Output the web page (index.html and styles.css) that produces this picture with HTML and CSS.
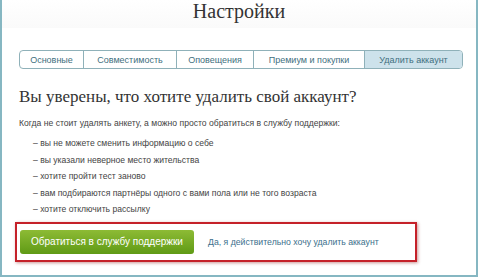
FILE: index.html
```html
<!DOCTYPE html>
<html>
<head>
  <title>Настройки</title>
  <link rel="stylesheet" href="styles.css">
</head>
<body>
  <div class="frame">
    <h1 class="title">Настройки</h1>

    <div class="tabs">
      <div class="tab tab-basic">Основные</div>
      <div class="tab tab-compat">Совместимость</div>
      <div class="tab tab-notify">Оповещения</div>
      <div class="tab tab-premium">Премиум и покупки</div>
      <div class="tab tab-delete active">Удалить аккаунт</div>
    </div>

    <h2 class="question">Вы уверены, что хотите удалить свой аккаунт?</h2>
    <p class="intro">Когда не стоит удалять анкету, а можно просто обратиться в службу поддержки:</p>

    <ul class="reasons">
      <li>– вы не можете сменить информацию о себе</li>
      <li>– вы указали неверное место жительства</li>
      <li>– хотите пройти тест заново</li>
      <li>– вам подбираются партнёры одного с вами пола или не того возраста</li>
      <li>– хотите отключить рассылку</li>
    </ul>

    <div class="actions">
      <a class="btn-support" href="#">Обратиться в службу поддержки</a>
      <a class="link-delete" href="#">Да, я действительно хочу удалить аккаунт</a>
    </div>
  </div>
</body>
</html>
```

FILE: styles.css
```css
body {
  margin: 0;
  background-color: #fff;
  font-family: "Liberation Sans", Arial, sans-serif;
  color: #444;
}

.frame {
  width: 474px;
  height: 275px;
  border-left: 2px solid #86b7c2;
  border-right: 2px solid #86b7c2;
  border-bottom: 2px solid #86b7c2;
  overflow: hidden;
}

.title {
  margin: 0;
  padding-top: 1px;
  height: 27px;
  font-family: "Liberation Serif", "DejaVu Serif", serif;
  font-weight: normal;
  font-size: 20px;
  line-height: 20px;
  text-align: center;
  color: #333;
  background: linear-gradient(#fff, #fafafa);
}

.tabs {
  display: flex;
  margin: 22px 0 0 17px;
  width: 442px;
  height: 17px;
  border: 1px solid #8fb1b9;
  border-radius: 4px;
  overflow: hidden;
}

.tab {
  display: flex;
  justify-content: center;
  align-items: center;
  font-size: 9px;
  color: #3f6f7e;
  border-right: 1px solid #8fb1b9;
}

.tab:last-child {
  border-right: 0;
}

.tab-basic { width: 63px; }
.tab-compat { width: 92px; }
.tab-notify { width: 76px; }
.tab-premium { width: 110px; }
.tab-delete { flex: 1; }

.tab.active {
  background-color: #cde2eb;
}

.question {
  margin: 17px 0 0 17px;
  font-family: "Liberation Serif", "DejaVu Serif", serif;
  font-weight: normal;
  font-size: 17px;
  line-height: 22px;
  color: #333;
}

.intro {
  margin: 9px 0 0 17px;
  font-size: 8.6px;
  line-height: 12px;
  color: #444;
}

.reasons {
  list-style: none;
  margin: 6px 0 0 31px;
  padding: 0;
  font-size: 8.6px;
  color: #444;
}

.reasons li {
  line-height: 16.5px;
}

.actions {
  display: flex;
  align-items: center;
  gap: 14px;
  margin: 4px 0 0 13px;
  width: 395px;
  height: 36px;
  padding: 0 0 0 3px;
  border: 2px solid #c52129;
  box-shadow: 1px 1px 3px rgba(140, 20, 20, 0.45);
}

.btn-support {
  display: flex;
  justify-content: center;
  align-items: center;
  width: 174px;
  height: 24px;
  border-radius: 3px;
  background: linear-gradient(#8dbb35, #5f9a15);
  color: #fff;
  font-size: 10px;
  text-decoration: none;
}

.link-delete {
  font-size: 8.7px;
  color: #3c6f8c;
  text-decoration: none;
}
```
